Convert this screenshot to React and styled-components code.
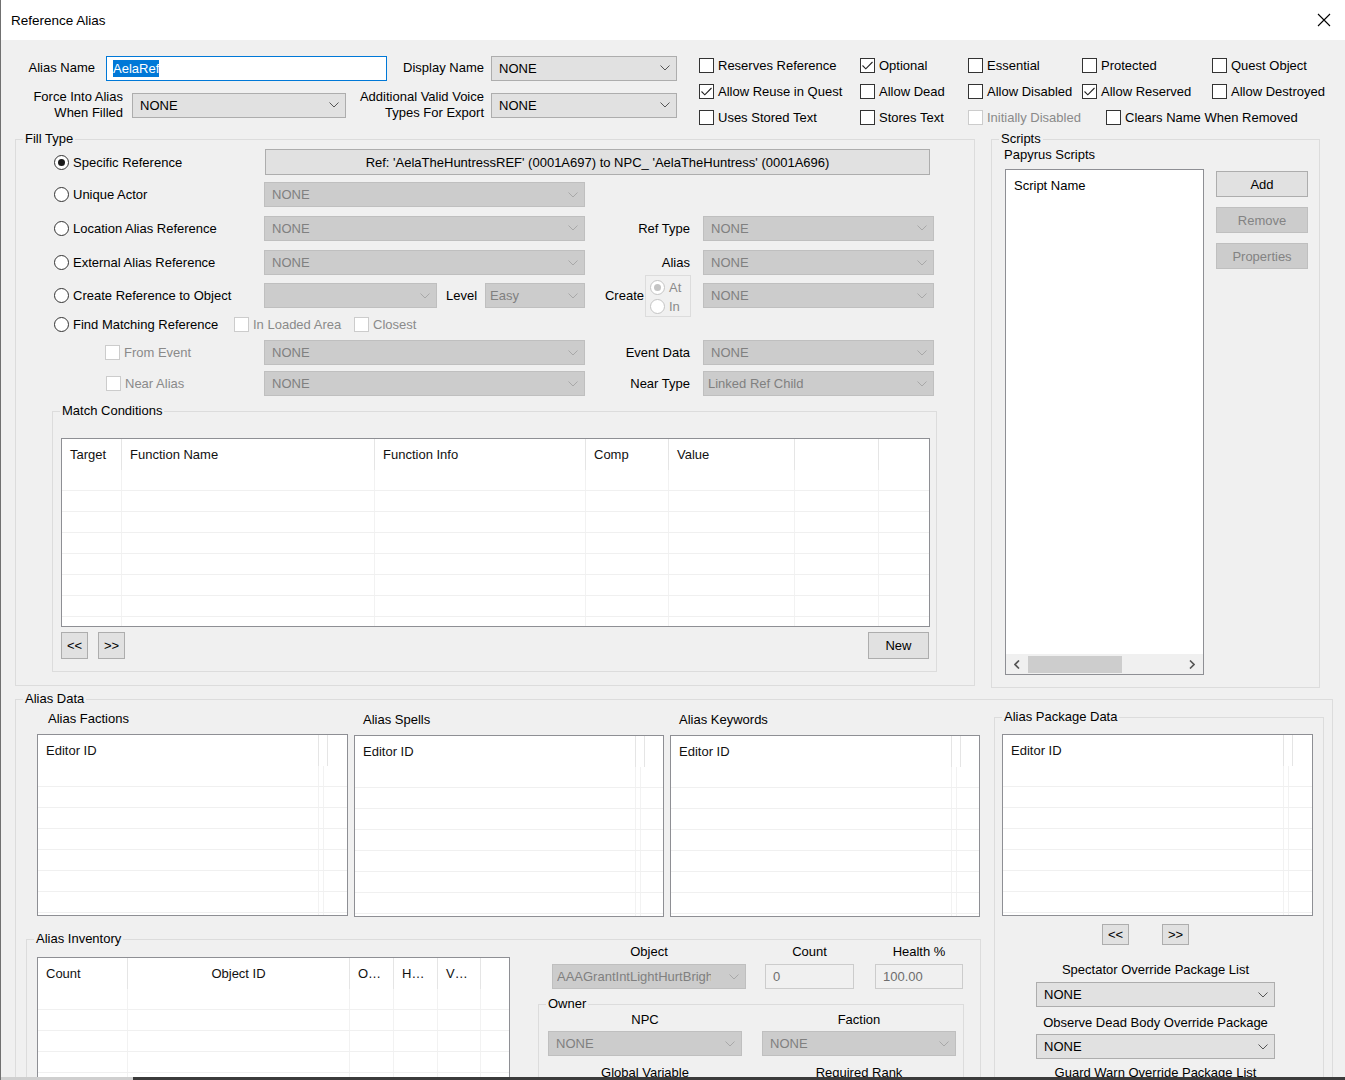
import React from "react";
import styled, { createGlobalStyle } from "styled-components";

const GlobalStyle = createGlobalStyle`
  html, body {
    margin: 0;
    padding: 0;
    background: #f0f0f0;
  }
  body {
    font-family: "Liberation Sans", Arial, sans-serif;
    font-size: 13px;
    color: #000;
  }
  * {
    box-sizing: border-box;
  }
`;

/* ---------- small controls ---------- */

function Chevron({ disabled }) {
  return (
    <ChevronSvg width="10" height="6" viewBox="0 0 10 6">
      <polyline
        points="0.5,0.5 5,5 9.5,0.5"
        fill="none"
        stroke={disabled ? "#a8a8a8" : "#555"}
        strokeWidth="1"
      />
    </ChevronSvg>
  );
}

function Combo({ width, value, disabled, inset = 7, clip = 0 }) {
  return (
    <ComboBox $w={width} $disabled={disabled} $inset={inset}>
      <ComboText $clip={clip}>{value}</ComboText>
      <Chevron disabled={disabled} />
    </ComboBox>
  );
}

function Check({ label, checked, disabled, className }) {
  return (
    <CheckItem className={className} $disabled={disabled}>
      <CheckBox $disabled={disabled}>
        {checked && (
          <svg width="11" height="9" viewBox="0 0 11 9">
            <polyline points="0.5,4.5 3.8,7.8 10.5,1" fill="none" stroke="#222" strokeWidth="1.1" />
          </svg>
        )}
      </CheckBox>
      {label}
    </CheckItem>
  );
}

function Radio({ label, checked, disabled }) {
  return (
    <RadioItem $disabled={disabled}>
      <RadioCircle $disabled={disabled}>{checked && <RadioDot $disabled={disabled} />}</RadioCircle>
      {label}
    </RadioItem>
  );
}

function DataTable({ columns, width, height }) {
  const rowCount = Math.ceil((height - 33) / 21);
  return (
    <TableFrame $w={width} $h={height}>
      <HeadRow>
        {columns.map((c, i) => (
          <HeadCell key={i} $w={c.w} $center={c.center}>
            {c.label}
          </HeadCell>
        ))}
      </HeadRow>
      {Array.from({ length: rowCount }, (_, r) => (
        <BodyRow key={r}>
          {columns.map((c, i) => (
            <BodyCell key={i} $w={c.w} />
          ))}
        </BodyRow>
      ))}
    </TableFrame>
  );
}

function ScrollArrow({ dir }) {
  return (
    <svg width="6" height="9" viewBox="0 0 6 9">
      <polyline
        points={dir === "left" ? "5,0.5 1,4.5 5,8.5" : "1,0.5 5,4.5 1,8.5"}
        fill="none"
        stroke="#555"
        strokeWidth="1.6"
      />
    </svg>
  );
}

const editorCols = [{ label: "Editor ID", w: 281 }, { w: 5 }, {}];

const matchCols = [
  { label: "Target", w: 60 },
  { label: "Function Name", w: 253 },
  { label: "Function Info", w: 211 },
  { label: "Comp", w: 83 },
  { label: "Value", w: 126 },
  { w: 84 },
  {},
];

const inventoryCols = [
  { label: "Count", w: 90 },
  { label: "Object ID", w: 222, center: true },
  { label: "O…", w: 44 },
  { label: "H…", w: 44 },
  { label: "V…", w: 43 },
  {},
];

export default function App() {
  return (
    <>
      <GlobalStyle />
      <Window>
        <TitleBar>
          <Title>Reference Alias</Title>
          <CloseButton>
            <svg width="14" height="14" viewBox="0 0 14 14">
              <path d="M1 1 L13 13 M13 1 L1 13" stroke="#000" strokeWidth="1.1" />
            </svg>
          </CloseButton>
        </TitleBar>

        {/* top fields + flags */}
        <TopSection>
          <FieldColumn>
            <FieldRow>
              <FieldLabel $w={94} $gap={11}>Alias Name</FieldLabel>
              <NameInput>
                <Selected>AelaRef</Selected>
              </NameInput>
              <FieldLabel $w={97} $gap={7}>Display Name</FieldLabel>
              <Combo width={186} value="NONE" />
            </FieldRow>
            <FieldRow>
              <FieldLabel $w={122} $gap={9}>
                Force Into Alias
                <br />
                When Filled
              </FieldLabel>
              <Combo width={214} value="NONE" />
              <FieldLabel $w={138} $gap={7}>
                Additional Valid Voice
                <br />
                Types For Export
              </FieldLabel>
              <Combo width={186} value="NONE" />
            </FieldRow>
          </FieldColumn>

          <CheckGrid>
            <Check label="Reserves Reference" />
            <Check label="Optional" checked />
            <Check label="Essential" />
            <Check label="Protected" />
            <Check label="Quest Object" />
            <Check label="Allow Reuse in Quest" checked />
            <Check label="Allow Dead" />
            <Check label="Allow Disabled" />
            <Check label="Allow Reserved" checked />
            <Check label="Allow Destroyed" />
            <Check label="Uses Stored Text" />
            <Check label="Stores Text" />
            <Check label="Initially Disabled" disabled />
            <WideCheck label="Clears Name When Removed" />
          </CheckGrid>
        </TopSection>

        <MiddleRow>
          {/* Fill Type */}
          <GroupBox $w={960} $h={555}>
            <GroupLegend>Fill Type</GroupLegend>
            <FillGrid>
              <FirstCol>
                <Radio label="Specific Reference" checked />
              </FirstCol>
              <RefButton>Ref: 'AelaTheHuntressREF' (0001A697) to NPC_ 'AelaTheHuntress' (0001A696)</RefButton>

              <FirstCol>
                <Radio label="Unique Actor" />
              </FirstCol>
              <Combo width={321} value="NONE" disabled />

              <FirstCol>
                <Radio label="Location Alias Reference" />
              </FirstCol>
              <Combo width={321} value="NONE" disabled />
              <RightLabel>Ref Type</RightLabel>
              <Combo width={231} value="NONE" disabled />

              <FirstCol>
                <Radio label="External Alias Reference" />
              </FirstCol>
              <Combo width={321} value="NONE" disabled />
              <RightLabel>Alias</RightLabel>
              <Combo width={231} value="NONE" disabled />

              <FirstCol>
                <Radio label="Create Reference to Object" />
              </FirstCol>
              <InlineCell>
                <Combo width={173} value="" disabled />
                <LevelLabel>Level</LevelLabel>
                <Combo width={100} value="Easy" disabled inset={4} />
              </InlineCell>
              <CreateCell>
                Create
                <AtInBox>
                  <AtInRow>
                    <Radio label="At" checked disabled />
                  </AtInRow>
                  <AtInRow>
                    <Radio label="In" disabled />
                  </AtInRow>
                </AtInBox>
              </CreateCell>
              <Combo width={231} value="NONE" disabled />

              <FindCell>
                <FindRadio>
                  <Radio label="Find Matching Reference" />
                </FindRadio>
                <LoadedCheck label="In Loaded Area" disabled />
                <Check label="Closest" disabled />
              </FindCell>

              <SubCheckCell $indent={51}>
                <Check label="From Event" disabled />
              </SubCheckCell>
              <Combo width={321} value="NONE" disabled />
              <RightLabel>Event Data</RightLabel>
              <Combo width={231} value="NONE" disabled />

              <SubCheckCell $indent={52}>
                <Check label="Near Alias" disabled />
              </SubCheckCell>
              <Combo width={321} value="NONE" disabled />
              <RightLabel>Near Type</RightLabel>
              <Combo width={231} value="Linked Ref Child" disabled inset={4} />
            </FillGrid>

            <MatchGroup $w={885} $h={269}>
              <GroupLegend>Match Conditions</GroupLegend>
              <MatchInner>
                <DataTable columns={matchCols} width={869} height={189} />
                <TableButtons>
                  <Button $w={27} $h={27}>&lt;&lt;</Button>
                  <Button $w={27} $h={27} $ml={10}>&gt;&gt;</Button>
                  <Button $w={61} $h={27} $ml="auto">New</Button>
                </TableButtons>
              </MatchInner>
            </MatchGroup>
          </GroupBox>

          {/* Scripts */}
          <GroupBox $w={329} $h={557}>
            <GroupLegend>Scripts</GroupLegend>
            <PapyrusLabel>Papyrus Scripts</PapyrusLabel>
            <ScriptsBody>
              <ScriptList>
                <ScriptHead>Script Name</ScriptHead>
                <ScriptSpacer />
                <HScroll>
                  <ScrollArrow dir="left" />
                  <ScrollThumb />
                  <ScriptSpacer />
                  <ScrollArrow dir="right" />
                </HScroll>
              </ScriptList>
              <ScriptButtons>
                <Button $w={92} $h={26}>Add</Button>
                <Button $w={92} $h={26} $disabled>Remove</Button>
                <Button $w={92} $h={26} $disabled>Properties</Button>
              </ScriptButtons>
            </ScriptsBody>
          </GroupBox>
        </MiddleRow>

        {/* Alias Data */}
        <AliasDataGroup $w={1318} $h={420}>
          <GroupLegend>Alias Data</GroupLegend>
          <AliasDataBody>
            <LeftColumn>
              <ListsRow>
                <ListItem>
                  <ListLabel $pl={11}>Alias Factions</ListLabel>
                  <DataTable columns={editorCols} width={311} height={182} />
                </ListItem>
                <ListItem $mt={1}>
                  <ListLabel $pl={9}>Alias Spells</ListLabel>
                  <DataTable columns={editorCols} width={310} height={182} />
                </ListItem>
                <ListItem $mt={1}>
                  <ListLabel $pl={9}>Alias Keywords</ListLabel>
                  <DataTable columns={editorCols} width={310} height={182} />
                </ListItem>
              </ListsRow>

              <InventoryGroup $w={955} $h={220}>
                <GroupLegend>Alias Inventory</GroupLegend>
                <InventoryBody>
                  <InventoryTable>
                    <DataTable columns={inventoryCols} width={473} height={200} />
                  </InventoryTable>
                  <InventoryRight>
                    <InvTopRow>
                      <InvField $w={194}>
                        <CenterLabel>Object</CenterLabel>
                        <Combo width={194} value="AAAGrantIntLightHurtBright" disabled inset={4} clip={12} />
                      </InvField>
                      <InvField $w={89} $ml={19}>
                        <CenterLabel>Count</CenterLabel>
                        <EditBox>0</EditBox>
                      </InvField>
                      <InvField $w={88} $ml={21}>
                        <CenterLabel>Health %</CenterLabel>
                        <EditBox>100.00</EditBox>
                      </InvField>
                    </InvTopRow>

                    <OwnerGroup $w={426} $h={120}>
                      <GroupLegend>Owner</GroupLegend>
                      <OwnerRow>
                        <InvField $w={194}>
                          <OwnerLabel>NPC</OwnerLabel>
                          <Combo width={194} value="NONE" disabled />
                        </InvField>
                        <InvField $w={194} $ml={20}>
                          <OwnerLabel>Faction</OwnerLabel>
                          <Combo width={194} value="NONE" disabled />
                        </InvField>
                      </OwnerRow>
                      <OwnerRow $mt={9}>
                        <InvField $w={194}>
                          <OwnerLabel>Global Variable</OwnerLabel>
                        </InvField>
                        <InvField $w={194} $ml={20}>
                          <OwnerLabel>Required Rank</OwnerLabel>
                        </InvField>
                      </OwnerRow>
                    </OwnerGroup>
                  </InventoryRight>
                </InventoryBody>
              </InventoryGroup>
            </LeftColumn>

            <PackageGroup $w={330} $h={420}>
              <GroupLegend>Alias Package Data</GroupLegend>
              <PackageList>
                <DataTable columns={editorCols} width={311} height={182} />
              </PackageList>
              <NavRow>
                <Button $w={27} $h={21}>&lt;&lt;</Button>
                <Button $w={27} $h={21}>&gt;&gt;</Button>
              </NavRow>
              <OverrideBlock>
                <OverrideLabel $mt={17}>Spectator Override Package List</OverrideLabel>
                <OverrideCombo $mt={4}>
                  <Combo width={239} value="NONE" />
                </OverrideCombo>
                <OverrideLabel $mt={8}>Observe Dead Body Override Package</OverrideLabel>
                <OverrideCombo $mt={3}>
                  <Combo width={239} value="NONE" />
                </OverrideCombo>
                <OverrideLabel $mt={6}>Guard Warn Override Package List</OverrideLabel>
              </OverrideBlock>
            </PackageGroup>
          </AliasDataBody>
        </AliasDataGroup>

        <BottomEdge />
      </Window>
    </>
  );
}

/* ===== styled-components ===== */

const Window = styled.div`
  position: relative;
  width: 1345px;
  height: 1080px;
  overflow: hidden;
  background: #f0f0f0;
  border-left: 1px solid #707070;
`;

const TitleBar = styled.div`
  height: 40px;
  background: #fff;
  display: flex;
  align-items: center;
  justify-content: space-between;
  padding-left: 10px;
`;

const Title = styled.span`
  font-size: 13.5px;
  color: #000;
`;

const CloseButton = styled.div`
  width: 42px;
  height: 40px;
  display: flex;
  align-items: center;
  justify-content: center;
`;

const TopSection = styled.div`
  display: flex;
  align-items: flex-start;
  height: 91px;
`;

const FieldColumn = styled.div`
  display: flex;
  flex-direction: column;
  gap: 11px;
  padding-top: 15px;
`;

const FieldRow = styled.div`
  display: flex;
  align-items: center;
  height: 26px;
`;

const FieldLabel = styled.div`
  width: ${(p) => p.$w}px;
  margin-right: ${(p) => p.$gap}px;
  flex-shrink: 0;
  text-align: right;
  line-height: 16px;
  white-space: nowrap;
`;

const NameInput = styled.div`
  width: 281px;
  height: 25px;
  flex-shrink: 0;
  display: flex;
  align-items: center;
  padding-left: 6px;
  background: #fff;
  border: 1px solid #0078d7;
`;

const Selected = styled.span`
  background: #0078d7;
  color: #fff;
  line-height: 17px;
`;

const ComboBox = styled.div`
  width: ${(p) => p.$w}px;
  height: 25px;
  flex-shrink: 0;
  display: flex;
  align-items: center;
  padding: 0 6px 0 ${(p) => p.$inset}px;
  background: ${(p) => (p.$disabled ? "#cccccc" : "#e1e1e1")};
  border: 1px solid ${(p) => (p.$disabled ? "#bfbfbf" : "#adadad")};
  color: ${(p) => (p.$disabled ? "#808080" : "#000")};
`;

const ComboText = styled.span`
  flex: 1;
  overflow: hidden;
  white-space: nowrap;
  margin-right: ${(p) => p.$clip}px;
`;

const ChevronSvg = styled.svg`
  flex-shrink: 0;
  margin-left: 6px;
`;

const CheckGrid = styled.div`
  display: grid;
  grid-template-columns: 161px 108px 114px 130px auto;
  grid-auto-rows: 26px;
  margin: 12px 0 0 22px;
`;

const CheckItem = styled.div`
  display: flex;
  align-items: center;
  gap: 4px;
  white-space: nowrap;
  color: ${(p) => (p.$disabled ? "#8a8a8a" : "#000")};
`;

const WideCheck = styled(Check)`
  grid-column: 4 / 6;
  padding-left: 24px;
`;

const CheckBox = styled.span`
  width: 15px;
  height: 15px;
  flex-shrink: 0;
  display: flex;
  align-items: center;
  justify-content: center;
  background: #fff;
  border: 1px solid ${(p) => (p.$disabled ? "#cccccc" : "#333")};
`;

const RadioItem = styled.div`
  display: flex;
  align-items: center;
  gap: 4px;
  white-space: nowrap;
  color: ${(p) => (p.$disabled ? "#8a8a8a" : "#000")};
`;

const RadioCircle = styled.span`
  width: 15px;
  height: 15px;
  flex-shrink: 0;
  border-radius: 50%;
  display: flex;
  align-items: center;
  justify-content: center;
  background: #fff;
  border: 1px solid ${(p) => (p.$disabled ? "#c4c4c4" : "#333")};
`;

const RadioDot = styled.span`
  width: 7px;
  height: 7px;
  border-radius: 50%;
  background: ${(p) => (p.$disabled ? "#c4c4c4" : "#1a1a1a")};
`;

const MiddleRow = styled.div`
  display: flex;
  align-items: flex-start;
  gap: 16px;
  margin-left: 14px;
`;

const GroupBox = styled.fieldset`
  margin: 0;
  padding: 0;
  min-width: 0;
  flex-shrink: 0;
  width: ${(p) => p.$w}px;
  height: ${(p) => p.$h}px;
  border: 1px solid #dcdcdc;
  font: inherit;
`;

const GroupLegend = styled.legend`
  margin-left: 7px;
  padding: 0 2px;
  line-height: 16px;
  font-size: 13px;
`;

const FillGrid = styled.div`
  display: grid;
  grid-template-columns: 210px 321px 118px 231px;
  grid-template-rows: 32px 33px 34px 35px 31px 27px 29px 33px;
  align-items: center;
  margin: -1px 0 0 38px;
`;

const FirstCol = styled.div`
  grid-column: 1;
`;

const RefButton = styled.div`
  grid-column: 2 / 5;
  width: 665px;
  height: 26px;
  margin-left: 1px;
  display: flex;
  align-items: center;
  justify-content: center;
  background: #e1e1e1;
  border: 1px solid #adadad;
  white-space: nowrap;
`;

const RightLabel = styled.div`
  text-align: right;
  padding-right: 13px;
  white-space: nowrap;
`;

const InlineCell = styled.div`
  display: flex;
  align-items: center;
`;

const LevelLabel = styled.span`
  width: 48px;
  padding-left: 9px;
  flex-shrink: 0;
  white-space: nowrap;
`;

const CreateCell = styled.div`
  display: flex;
  align-items: center;
  justify-content: flex-end;
  gap: 1px;
  padding-right: 12px;
`;

const AtInBox = styled.div`
  width: 46px;
  height: 42px;
  display: flex;
  flex-direction: column;
  padding: 3px 0 0 4px;
  border: 1px solid #dcdcdc;
`;

const AtInRow = styled.div`
  height: 19px;
  display: flex;
  align-items: center;
`;

const FindCell = styled.div`
  grid-column: 1 / 3;
  display: flex;
  align-items: center;
`;

const FindRadio = styled.div`
  width: 180px;
  flex-shrink: 0;
`;

const LoadedCheck = styled(Check)`
  width: 120px;
`;

const SubCheckCell = styled.div`
  grid-column: 1;
  padding-left: ${(p) => p.$indent}px;
`;

const MatchGroup = styled(GroupBox)`
  margin: 3px 0 0 36px;
`;

const MatchInner = styled.div`
  padding: 19px 0 0 8px;
`;

const TableButtons = styled.div`
  width: 868px;
  display: flex;
  align-items: center;
  margin-top: 5px;
`;

const Button = styled.div`
  width: ${(p) => p.$w}px;
  height: ${(p) => p.$h}px;
  margin-left: ${(p) => (p.$ml === "auto" ? "auto" : `${p.$ml || 0}px`)};
  flex-shrink: 0;
  display: flex;
  align-items: center;
  justify-content: center;
  background: ${(p) => (p.$disabled ? "#cccccc" : "#e1e1e1")};
  border: 1px solid ${(p) => (p.$disabled ? "#bfbfbf" : "#adadad")};
  color: ${(p) => (p.$disabled ? "#838383" : "#000")};
  white-space: nowrap;
`;

const TableFrame = styled.div`
  width: ${(p) => p.$w}px;
  height: ${(p) => p.$h}px;
  flex-shrink: 0;
  overflow: hidden;
  background: #fff;
  border: 1px solid #8e8f94;
`;

const HeadRow = styled.div`
  display: flex;
  height: 31px;
`;

const HeadCell = styled.div`
  flex: ${(p) => (p.$w ? `0 0 ${p.$w}px` : "1")};
  height: 31px;
  line-height: 31px;
  padding-left: ${(p) => (p.$center ? 0 : 8)}px;
  text-align: ${(p) => (p.$center ? "center" : "left")};
  white-space: nowrap;
  overflow: hidden;
  border-right: 1px solid #e5e5e5;
  color: #111;

  &:last-child {
    border-right: none;
  }
`;

const BodyRow = styled.div`
  display: flex;
  height: 21px;
  border-bottom: 1px solid #f0f0f0;
`;

const BodyCell = styled.div`
  flex: ${(p) => (p.$w ? `0 0 ${p.$w}px` : "1")};
  border-right: 1px solid #f2f2f2;

  &:last-child {
    border-right: none;
  }
`;

const PapyrusLabel = styled.div`
  padding-left: 12px;
  line-height: 16px;
`;

const ScriptsBody = styled.div`
  display: flex;
  align-items: flex-start;
  margin-top: 6px;
`;

const ScriptList = styled.div`
  width: 199px;
  height: 506px;
  margin-left: 13px;
  display: flex;
  flex-direction: column;
  background: #fff;
  border: 1px solid #8e8f94;
`;

const ScriptHead = styled.div`
  height: 32px;
  line-height: 32px;
  padding-left: 8px;
`;

const ScriptSpacer = styled.div`
  flex: 1;
`;

const HScroll = styled.div`
  height: 20px;
  display: flex;
  align-items: center;
  padding: 0 8px;
  background: #f0f0f0;
`;

const ScrollThumb = styled.div`
  width: 94px;
  height: 17px;
  margin-left: 8px;
  background: #cdcdcd;
`;

const ScriptButtons = styled.div`
  display: flex;
  flex-direction: column;
  gap: 10px;
  margin: 2px 0 0 12px;
`;

const AliasDataGroup = styled(GroupBox)`
  margin: 3px 0 0 14px;
`;

const AliasDataBody = styled.div`
  display: flex;
  align-items: flex-start;
`;

const LeftColumn = styled.div`
  width: 955px;
  margin-left: 10px;
  flex-shrink: 0;
`;

const ListsRow = styled.div`
  display: flex;
  align-items: flex-start;
  gap: 6px;
  margin: 4px 0 0 11px;
`;

const ListItem = styled.div`
  display: flex;
  flex-direction: column;
  gap: 7px;
  margin-top: ${(p) => p.$mt || 0}px;
`;

const ListLabel = styled.div`
  padding-left: ${(p) => p.$pl}px;
  line-height: 16px;
`;

const InventoryGroup = styled(GroupBox)`
  margin-top: 14px;
`;

const InventoryBody = styled.div`
  display: flex;
  align-items: flex-start;
`;

const InventoryTable = styled.div`
  margin: 10px 0 0 10px;
`;

const InventoryRight = styled.div`
  width: 426px;
  margin: -3px 0 0 28px;
`;

const InvTopRow = styled.div`
  display: flex;
  padding-left: 14px;
`;

const InvField = styled.div`
  width: ${(p) => p.$w}px;
  margin-left: ${(p) => p.$ml || 0}px;
  display: flex;
  flex-direction: column;
`;

const CenterLabel = styled.div`
  line-height: 16px;
  margin-bottom: 4px;
  text-align: center;
`;

const EditBox = styled.div`
  height: 25px;
  display: flex;
  align-items: center;
  padding-left: 7px;
  background: #f0f0f0;
  border: 1px solid #cccccc;
  color: #6d6d6d;
`;

const OwnerGroup = styled(GroupBox)`
  margin-top: 7px;
`;

const OwnerRow = styled.div`
  display: flex;
  padding-left: 9px;
  margin-top: ${(p) => p.$mt || 0}px;
`;

const OwnerLabel = styled.div`
  line-height: 16px;
  margin-bottom: 3px;
  text-align: center;
`;

const PackageGroup = styled(GroupBox)`
  margin: 2px 0 0 13px;
`;

const PackageList = styled.div`
  margin: 9px 0 0 7px;
`;

const NavRow = styled.div`
  display: flex;
  gap: 33px;
  margin: 8px 0 0 107px;
`;

const OverrideBlock = styled.div`
  width: 239px;
  margin-left: 41px;
  display: flex;
  flex-direction: column;
`;

const OverrideLabel = styled.div`
  line-height: 16px;
  text-align: center;
  white-space: nowrap;
  margin-top: ${(p) => p.$mt}px;
`;

const OverrideCombo = styled.div`
  margin-top: ${(p) => p.$mt}px;
`;

const BottomEdge = styled.div`
  position: absolute;
  left: 0;
  right: 0;
  bottom: 0;
  height: 3px;
  background: linear-gradient(to right, #cfcfcf 0, #cfcfcf 132px, #3b3b3b 132px);
`;
